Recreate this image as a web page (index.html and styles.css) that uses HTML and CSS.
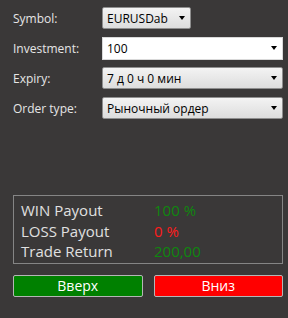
FILE: index.html
```html
<!DOCTYPE html>
<html lang="en">
<head>
    <meta charset="UTF-8">
    <title>Binary Option Panel</title>
    <link rel="stylesheet" href="styles.css">
</head>
<body>
    <div class="panel">
        <div class="form-row">
            <div class="label">Symbol:</div>
            <div class="combo combo-short">
                <span class="combo-text">EURUSDab</span>
                <span class="arrow"></span>
            </div>
        </div>
        <div class="form-row">
            <div class="label">Investment:</div>
            <div class="combo combo-edit">
                <span class="combo-text">100</span>
                <span class="arrow"></span>
            </div>
        </div>
        <div class="form-row">
            <div class="label">Expiry:</div>
            <div class="combo">
                <span class="combo-text">7 д 0 ч 0 мин</span>
                <span class="arrow"></span>
            </div>
        </div>
        <div class="form-row">
            <div class="label">Order type:</div>
            <div class="combo">
                <span class="combo-text">Рыночный ордер</span>
                <span class="arrow"></span>
            </div>
        </div>

        <div class="summary">
            <div class="summary-row">
                <span class="summary-label">WIN Payout</span>
                <span class="value green">100 %</span>
            </div>
            <div class="summary-row">
                <span class="summary-label">LOSS Payout</span>
                <span class="value red">0 %</span>
            </div>
            <div class="summary-row">
                <span class="summary-label">Trade Return</span>
                <span class="value green">200,00</span>
            </div>
        </div>

        <div class="buttons">
            <button class="btn btn-up">Вверх</button>
            <button class="btn btn-down">Вниз</button>
        </div>
    </div>
</body>
</html>
```

FILE: styles.css
```css
body {
    margin: 0;
    background: #3a3838;
    font-family: 'Open Sans', 'Noto Sans', sans-serif;
}
.panel {
    width: 288px;
    height: 318px;
    padding: 7px 5px 0 13px;
    box-sizing: border-box;
}
.form-row {
    display: flex;
    align-items: center;
    height: 22px;
    margin-bottom: 8px;
}
.label {
    width: 89px;
    font-size: 12px;
    color: #e6e6e6;
}
.combo {
    flex: 1;
    height: 22px;
    box-sizing: border-box;
    display: flex;
    align-items: center;
    padding: 0 5px 0 4px;
    border: 1px solid #8e8e8e;
    border-radius: 2px;
    background: linear-gradient(#f3f3f3, #dddddd);
    font-size: 12px;
    color: #000;
}
.combo-short {
    flex: none;
    width: 89px;
}
.combo-edit {
    background: #ffffff;
    border-color: #d9d9d9;
    border-radius: 0;
    height: 23px;
}
.combo-text {
    flex: 1;
}
.arrow {
    width: 0;
    height: 0;
    border-left: 3.5px solid transparent;
    border-right: 3.5px solid transparent;
    border-top: 4px solid #000;
}
.summary {
    margin-top: 76px;
    width: 270px;
    height: 69px;
    box-sizing: border-box;
    border: 1px solid #858585;
    padding: 4px 0 0 7px;
}
.summary-row {
    display: flex;
    height: 20.5px;
    font-size: 15px;
    line-height: 20px;
}
.summary-label {
    width: 133px;
    color: #e0e0e0;
}
.value {
    font-weight: 500;
}
.value.green {
    color: #0f870f;
}
.value.red {
    color: #ff1c1c;
}
.buttons {
    display: flex;
    gap: 11px;
    margin-top: 11px;
    width: 270px;
}
.btn {
    flex: 1;
    height: 22px;
    border: 1px solid #b5b5b5;
    border-radius: 2px;
    font-family: 'Open Sans', 'Noto Sans', sans-serif;
    font-size: 14px;
    line-height: 18px;
    color: #fff;
    padding: 0;
}
.btn-up {
    background: #008000;
}
.btn-down {
    background: #ff0000;
}
```
